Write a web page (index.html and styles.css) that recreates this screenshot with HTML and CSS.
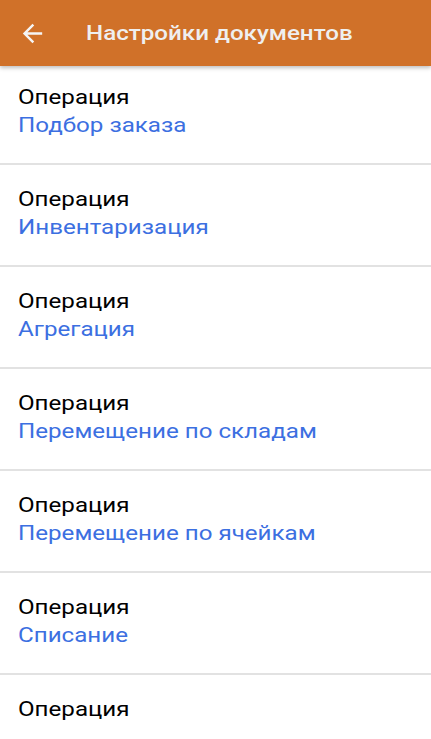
FILE: index.html
```html
<!DOCTYPE html>
<html lang="ru">
<head>
<meta charset="utf-8">
<title>Настройки документов</title>
<link rel="stylesheet" href="styles.css">
</head>
<body>
<header class="toolbar">
  <svg class="back" viewBox="0 0 24 24" width="29" height="29" aria-hidden="true"><path d="M20 11H7.83l5.59-5.59L12 4l-8 8 8 8 1.41-1.41L7.83 13H20v-2z" fill="#f5f5f5"/></svg>
  <h1 class="title"><span class="wide">Настройки документов</span></h1>
</header>
<ul class="list">
  <li class="item"><div class="label"><span class="wide">Операция</span></div><div class="value"><span class="wide">Подбор заказа</span></div></li>
  <li class="item"><div class="label"><span class="wide">Операция</span></div><div class="value"><span class="wide">Инвентаризация</span></div></li>
  <li class="item"><div class="label"><span class="wide">Операция</span></div><div class="value"><span class="wide">Агрегация</span></div></li>
  <li class="item"><div class="label"><span class="wide">Операция</span></div><div class="value"><span class="wide">Перемещение по складам</span></div></li>
  <li class="item"><div class="label"><span class="wide">Операция</span></div><div class="value"><span class="wide">Перемещение по ячейкам</span></div></li>
  <li class="item"><div class="label"><span class="wide">Операция</span></div><div class="value"><span class="wide">Списание</span></div></li>
  <li class="item"><div class="label"><span class="wide">Операция</span></div></li>
</ul>
</body>
</html>
```
FILE: styles.css
```css
html, body {
  margin: 0;
  padding: 0;
  background: #ffffff;
  font-family: Roboto, "Noto Sans", sans-serif;
  overflow: hidden;
  height: 739px;
}
.wide {
  display: inline-block;
  transform: scaleX(1.15);
  transform-origin: left center;
  white-space: nowrap;
}
.toolbar {
  position: relative;
  z-index: 2;
  height: 66px;
  background: #d07129;
  display: flex;
  align-items: center;
  box-shadow: 0 2px 4px rgba(0,0,0,0.25);
}
.back {
  margin-left: 18px;
  margin-top: 1px;
  flex: none;
}
.title {
  margin: 0 0 0 39px;
  font-size: 21px;
  font-weight: 500;
  color: #efefef;
  line-height: 28px;
}
.list {
  list-style: none;
  margin: 0;
  padding: 0;
}
.item {
  padding: 20px 18px 24px;
  border-bottom: 2px solid #e2e2e2;
  line-height: 28px;
  font-size: 21px;
}
.item:first-child {
  padding-top: 17px;
}
.label {
  color: #000000;
}
.value {
  color: #3c6fe1;
}
```
